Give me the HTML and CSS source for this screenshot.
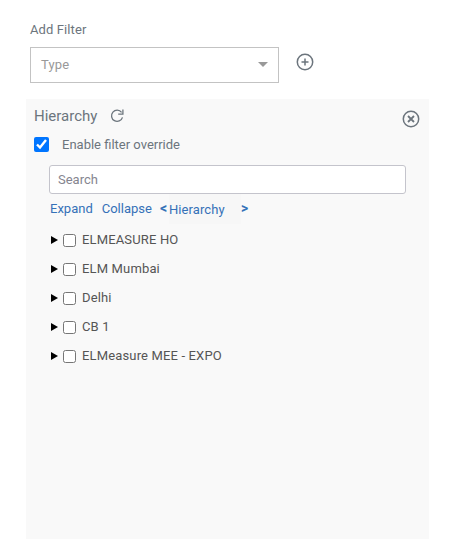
FILE: index.html
```html
<!DOCTYPE html>
<html lang="en">
<head>
<meta charset="utf-8">
<title>Add Filter</title>
<link rel="stylesheet" href="styles.css">
</head>
<body>
<section class="add-filter">
  <div class="label">Add Filter</div>
  <div class="type-row">
    <div class="select"><span>Type</span><span class="caret"></span></div>
    <svg class="icon" viewBox="0 0 18 18"><circle cx="9" cy="9" r="7.7"/><path d="M9 5.5v7M5.5 9h7"/></svg>
  </div>
</section>
<section class="panel">
  <header class="panel-head">
    <h2>Hierarchy</h2>
    <svg class="refresh" viewBox="0 0 14 14"><path d="M11.6 3.4A5.6 5.6 0 1 0 12.5 8.4"/><path d="M12.9 0.5v4.7H8.2"/></svg>
    <svg class="icon close" viewBox="0 0 18 18"><circle cx="9" cy="9" r="7.7"/><path class="cross" d="M6 6l6 6M12 6l-6 6"/></svg>
  </header>
  <label class="override"><input type="checkbox" checked><span>Enable filter override</span></label>
  <input class="search" type="text" placeholder="Search">
  <nav class="links">
    <a class="expand">Expand</a><a class="collapse">Collapse</a><b class="prev">&lt;</b><a class="current">Hierarchy</a><b class="next">&gt;</b>
  </nav>
  <ul class="tree">
    <li><i class="arrow"></i><input type="checkbox"><span>ELMEASURE HO</span></li>
    <li><i class="arrow"></i><input type="checkbox"><span>ELM Mumbai</span></li>
    <li><i class="arrow"></i><input type="checkbox"><span>Delhi</span></li>
    <li><i class="arrow"></i><input type="checkbox"><span>CB 1</span></li>
    <li><i class="arrow"></i><input type="checkbox"><span>ELMeasure MEE - EXPO</span></li>
  </ul>
</section>
</body>
</html>
```
FILE: styles.css
```css
* { box-sizing: border-box; }
body {
  margin: 0;
  height: 548px;
  overflow: hidden;
  background: #fff;
  color: #6c757d;
  font: 13px/20px Roboto, sans-serif;
}
.add-filter { height: 99px; padding: 20px 0 0 30px; }
.label { height: 27px; letter-spacing: 0.1px; }
.type-row { display: flex; align-items: flex-start; gap: 17px; }
.select {
  display: flex;
  align-items: center;
  justify-content: space-between;
  width: 249px;
  height: 36px;
  padding: 0 10px;
  border: 1px solid #c3c3c3;
  color: #999;
  letter-spacing: 0.15px;
}
.caret {
  margin-top: -1px;
  border: 5px solid transparent;
  border-top-color: #999;
  border-bottom: 0;
}
.icon {
  width: 18px;
  height: 18px;
  margin-top: 5.5px;
  margin-left: -0.5px;
  fill: none;
  stroke: #6c757d;
  stroke-width: 1.5;
}
.cross { stroke-width: 1.8; }
.panel {
  width: 403px;
  height: 440px;
  margin-left: 26px;
  background: #f9f9f9;
}
.panel-head { display: flex; height: 35px; padding: 7px 9px 0 8px; }
.panel-head h2 { margin: 0; font-size: 15px; font-weight: 400; }
.refresh {
  width: 14px;
  height: 14px;
  margin: 2.5px 0 0 12.5px;
  fill: none;
  stroke: #6c757d;
  stroke-width: 1.3;
}
.close { margin: 3.5px 0 0 auto; }
.override { display: flex; align-items: flex-start; height: 22px; padding-left: 8px; }
.override input { width: 15px; height: 15px; margin: 3px 13px 0 0; accent-color: #0075ff; }
.override span { padding-top: 1px; }
.search {
  display: block;
  width: 357px;
  height: 29px;
  margin: 9px 0 0 23px;
  padding: 0 8px;
  border: 1px solid #c4c4cc;
  border-radius: 3px;
  background: #fff;
  font: inherit;
}
.search::placeholder { color: #85858f; }
.links { display: flex; height: 30px; padding-left: 24px; line-height: 30px; color: #3571b8; }
.collapse { margin-left: 9px; }
.prev, .next { width: 9px; font-size: 14px; line-height: 29px; }
.prev { margin-left: 8px; }
.current {
  width: 72px;
  background: #f7f7f7;
  line-height: 32px;
  letter-spacing: 0.1px;
}
.tree { margin: 0; padding: 1px 0 0 25px; list-style: none; color: #555; letter-spacing: 0.15px; }
.tree li { display: flex; align-items: center; height: 29px; }
.arrow {
  border: 4px solid transparent;
  border-left: 7px solid #000;
  border-right: 0;
}
.tree input { width: 13px; height: 13px; margin: 1px 6px 0 5px; }
```
